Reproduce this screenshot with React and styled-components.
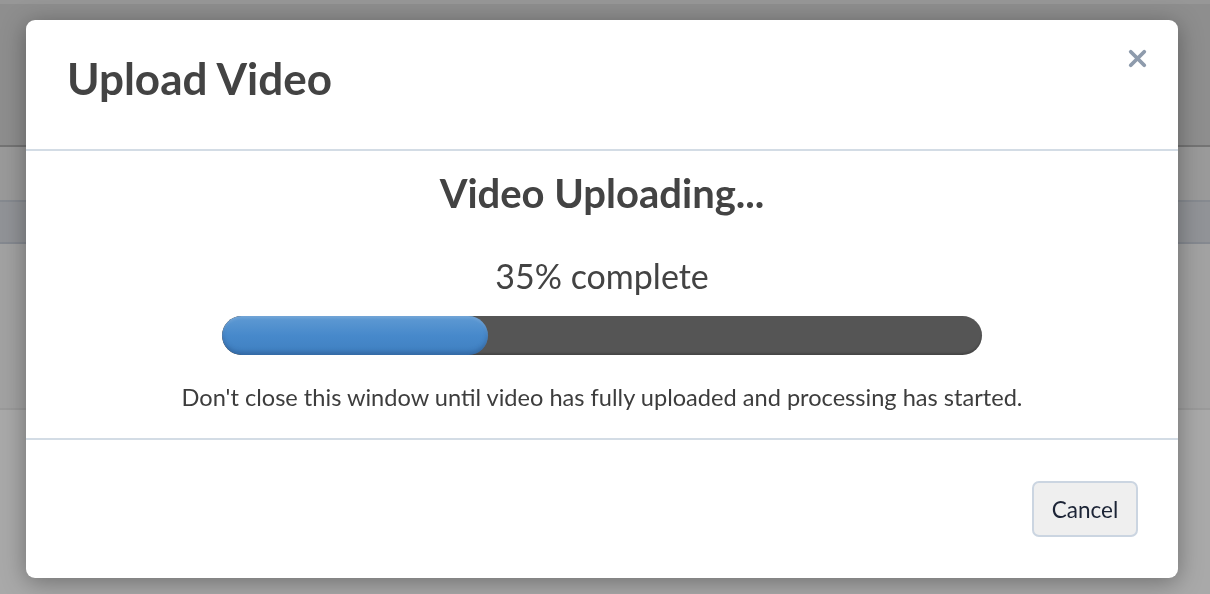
import React from "react";
import styled, { createGlobalStyle } from "styled-components";
import { X } from "lucide-react";

const GlobalStyle = createGlobalStyle`
  html, body {
    margin: 0;
    padding: 0;
    height: 100%;
    overflow: hidden;
  }
  body {
    font-family: Lato, "Open Sans", Arial, sans-serif;
    color: #444;
  }
`;

// the page that sits behind the dimmed overlay
const Page = styled.div`
  height: 594px;
  background: #a9a9a9;
  display: flex;
  flex-direction: column;
`;

const PageBand = styled.div`
  height: ${(p) => p.h}px;
  background: ${(p) => p.bg};
  border-bottom: ${(p) => (p.line ? `2px solid ${p.line}` : "none")};
  flex-shrink: 0;
`;

const Backdrop = styled.div`
  position: fixed;
  inset: 0;
  display: flex;
  justify-content: flex-start;
  align-items: flex-start;
  padding: 20px 0 0 26px;
`;

const Modal = styled.div`
  width: 1152px;
  height: 558px;
  background: #fff;
  border-radius: 9px;
  box-shadow: 0 4px 24px rgba(0, 0, 0, 0.35);
  display: flex;
  flex-direction: column;
  position: relative;
`;

const Header = styled.div`
  height: 129px;
  padding: 0 41px;
  display: flex;
  align-items: center;
  border-bottom: 2px solid #d3dce5;
  box-sizing: content-box;
`;

const Title = styled.h1`
  margin: 0 0 13px;
  font-size: 44px;
  font-weight: 700;
  color: #434343;
  line-height: 52px;
`;

const CloseButton = styled.button`
  position: absolute;
  top: 25px;
  right: 27px;
  border: none;
  background: none;
  padding: 0;
  color: #8e9bac;
  display: flex;
  cursor: pointer;
`;

const Body = styled.div`
  height: 287px;
  display: flex;
  flex-direction: column;
  align-items: center;
  border-bottom: 2px solid #d3dce5;
`;

const Heading = styled.h2`
  margin: 18px 0 0;
  font-size: 40px;
  font-weight: 700;
  color: #434343;
  line-height: 48px;
`;

const Percent = styled.div`
  margin-top: 39px;
  font-size: 34px;
  color: #434343;
  line-height: 40px;
`;

const Track = styled.div`
  margin-top: 20px;
  width: 760px;
  height: 39px;
  border-radius: 20px;
  background: #555;
  box-shadow: inset 0 -2px 2px rgba(0, 0, 0, 0.18);
  overflow: hidden;
  display: flex;
`;

const Fill = styled.div`
  height: 100%;
  border-radius: 20px;
  background: linear-gradient(to bottom, #5f9ad3 0%, #4789cb 50%, #3f7fc0 100%);
  box-shadow: inset 0 -3px 4px rgba(30, 60, 110, 0.35),
    inset 0 2px 3px rgba(255, 255, 255, 0.15);
`;

const Note = styled.p`
  margin: 28px 0 0;
  font-size: 23.6px;
  color: #3d3d3d;
  line-height: 28px;
`;

const Footer = styled.div`
  flex: 1;
  display: flex;
  justify-content: flex-end;
  align-items: center;
  padding: 0 40px 0 0;
`;

const CancelButton = styled.button`
  width: 106px;
  height: 56px;
  border: 2px solid #cbd5e1;
  border-radius: 7px;
  background: #efefef;
  color: #1c2436;
  font-family: Lato, "Open Sans", Arial, sans-serif;
  font-size: 22.5px;
  cursor: pointer;
`;

export default function App() {
  const progress = 35;
  return (
    <>
      <GlobalStyle />
      <Page>
        <PageBand h={4} bg="#979797" />
        <PageBand h={141} bg="#8e8e8e" line="#747474" />
        <PageBand h={53} bg="#9a9a9a" line="#868a90" />
        <PageBand h={40} bg="#919397" line="#858990" />
        <PageBand h={164} bg="#a2a2a2" line="#9a9a9a" />
      </Page>
      <Backdrop>
        <Modal>
          <Header>
            <Title>Upload Video</Title>
          </Header>
          <CloseButton aria-label="Close">
            <X size={27} strokeWidth={3.4} />
          </CloseButton>
          <Body>
            <Heading>Video Uploading...</Heading>
            <Percent>{progress}% complete</Percent>
            <Track>
              <Fill style={{ width: `${progress}%` }} />
            </Track>
            <Note>
              Don't close this window until video has fully uploaded and
              processing has started.
            </Note>
          </Body>
          <Footer>
            <CancelButton>Cancel</CancelButton>
          </Footer>
        </Modal>
      </Backdrop>
    </>
  );
}
